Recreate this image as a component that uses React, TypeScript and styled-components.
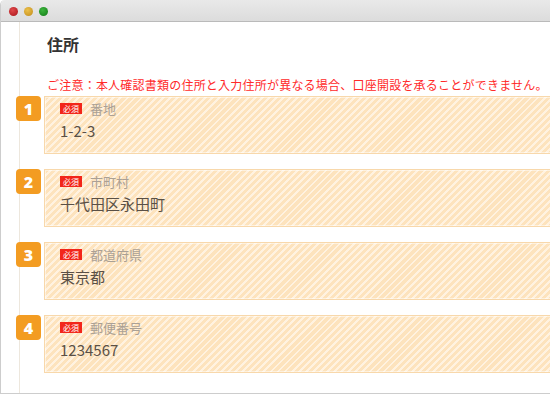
import styled, { createGlobalStyle } from 'styled-components';

const GlobalStyle = createGlobalStyle`
  html, body {
    margin: 0;
    padding: 0;
    background: #fff;
    overflow: hidden;
  }
  body {
    font-family: "Noto Sans CJK JP", "Noto Sans", sans-serif;
  }
`;

const fields = [
  { no: 1, label: '番地', value: '1-2-3' },
  { no: 2, label: '市町村', value: '千代田区永田町' },
  { no: 3, label: '都道府県', value: '東京都' },
  { no: 4, label: '郵便番号', value: '1234567' },
];

const dotColors = [
  ['#e0484a', '#a8151a'],
  ['#ecc04a', '#c08a1a'],
  ['#3cb43c', '#137a17'],
];

export default function App() {
  return (
    <>
      <GlobalStyle />
      <Window>
        <TitleBar>
          {dotColors.map(([light, dark]) => (
            <Dot key={light} $light={light} $dark={dark} />
          ))}
        </TitleBar>
        <Content>
          <Heading>住所</Heading>
          <Notice>
            ご注意：本人確認書類の住所と入力住所が異なる場合、口座開設を承ることができません。
          </Notice>
          <FieldList>
            {fields.map((f) => (
              <FieldRow key={f.no}>
                <StepBadge>{f.no}</StepBadge>
                <FieldBox>
                  <LabelLine>
                    <Required>必須</Required>
                    <Label>{f.label}</Label>
                  </LabelLine>
                  <Value>{f.value}</Value>
                </FieldBox>
              </FieldRow>
            ))}
          </FieldList>
        </Content>
      </Window>
    </>
  );
}

const Window = styled('div')`
  width: 580px;
  height: 394px;
  box-sizing: border-box;
  border: 1px solid #cdcdcd;
  border-top: none;
  border-radius: 5px 5px 0 0;
  overflow: hidden;
  display: flex;
  flex-direction: column;
`;

const TitleBar = styled('div')`
  height: 22px;
  flex: none;
  display: flex;
  align-items: center;
  gap: 6px;
  padding: 2px 0 0 8px;
  box-sizing: border-box;
  background: linear-gradient(#e9e9e9, #dcdcdc);
  border-bottom: 1px solid #bababa;
`;

const Dot = styled('span')<{ $light: string; $dark: string }>`
  width: 9px;
  height: 9px;
  border-radius: 50%;
  background: radial-gradient(circle at 40% 35%, ${(p) => p.$light}, ${(p) => p.$dark});
`;

const Content = styled('div')`
  flex: 1;
  background: linear-gradient(
    to right,
    transparent 18px,
    #ede7dd 18px,
    #ede7dd 19px,
    transparent 19px
  );
  padding-top: 11px;
`;

const Heading = styled('h2')`
  margin: 0 0 0 46px;
  font-size: 16px;
  line-height: 22px;
  font-weight: bold;
  color: #333;
`;

const Notice = styled('p')`
  margin: 21px 0 0 46px;
  font-size: 12px;
  line-height: 18px;
  letter-spacing: 0.22px;
  color: #ff2a2a;
  white-space: nowrap;
`;

const FieldList = styled('div')`
  margin: 2px 0 0 15px;
  display: flex;
  flex-direction: column;
  gap: 15px;
`;

const FieldRow = styled('div')`
  display: grid;
  grid-template-columns: 25px 1fr;
  column-gap: 3px;
  align-items: start;
`;

const StepBadge = styled('div')`
  width: 25px;
  height: 25px;
  border-radius: 4px;
  background: #f39c22;
  color: #fff;
  font-family: "Open Sans", "Noto Sans", sans-serif;
  font-weight: 800;
  font-size: 16px;
  display: flex;
  align-items: center;
  justify-content: center;
`;

const FieldBox = styled('div')`
  height: 58px;
  box-sizing: border-box;
  border: 1px solid #f8d8ab;
  box-shadow: inset 0 0 0 1px rgba(255, 255, 255, 0.5);
  padding: 3px 15px 0;
  background: repeating-linear-gradient(
    135deg,
    #fde3bd 0px,
    #fde3bd 3px,
    #fff2e0 3px,
    #fff2e0 5px
  );
`;

const LabelLine = styled('div')`
  display: flex;
  align-items: center;
  height: 16px;
`;

const Required = styled('span')`
  background: #f2261a;
  color: #fff;
  font-size: 8px;
  line-height: 11px;
  padding: 0 3px;
  margin-right: 8px;
`;

const Label = styled('span')`
  font-size: 13px;
  color: #aaa095;
`;

const Value = styled('div')`
  margin-top: 5px;
  font-size: 15px;
  line-height: 20px;
  color: #5a5046;
`;
